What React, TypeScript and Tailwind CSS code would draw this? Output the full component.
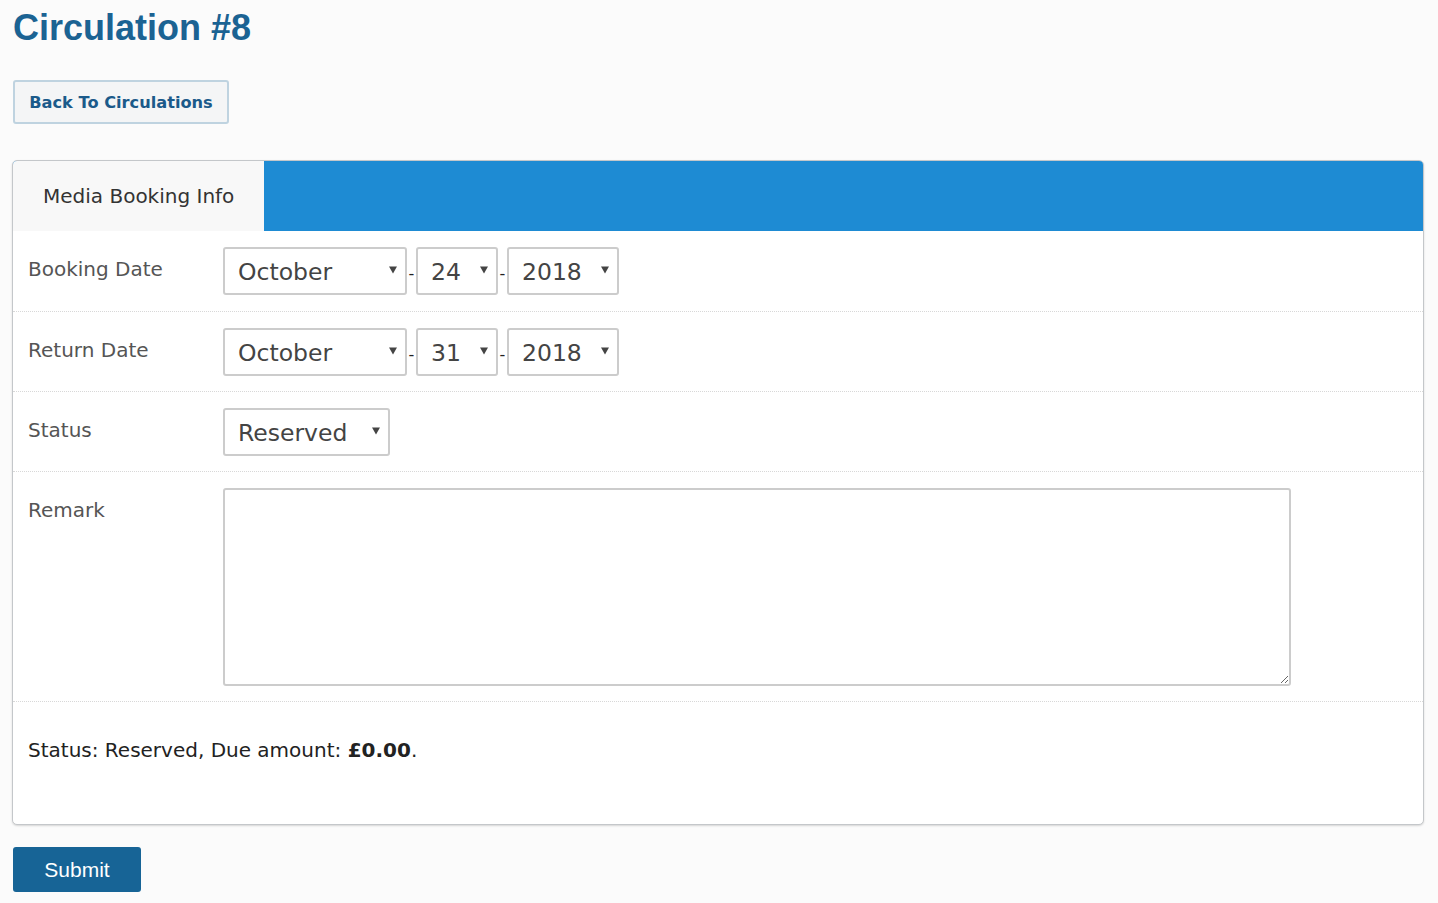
import React from "react";

const verdana = { fontFamily: '"DejaVu Sans", Verdana, sans-serif' };
const arial = { fontFamily: '"Liberation Sans", Arial, sans-serif' };

function Arrow() {
  return (
    <svg width="8" height="8" viewBox="0 0 8 8" className="pointer-events-none absolute right-[10px] top-[19px]">
      <path d="M0 0.5 L8 0.5 L4 7.5 Z" fill="#444" />
    </svg>
  );
}

function Select({ value, width }: { value: string; width: string }) {
  return (
    <div className={`relative h-[48px] ${width}`}>
      <div className="flex h-[48px] items-center rounded-[3px] border-2 border-[#cccccc] bg-white pl-[13px] pt-[3px] text-[23.5px] text-[#444]">
        {value}
      </div>
      <Arrow />
    </div>
  );
}

function Dash() {
  return <span className="mt-[6px] w-[9px] text-center text-[16px] text-[#222]">-</span>;
}

function Row({ label, children, first = false }: { label: string; children: React.ReactNode; first?: boolean }) {
  return (
    <div className={`flex border-b border-dotted border-[#d8d8d8] pt-[16px] ${first ? "pb-[16px]" : "pb-[15px]"}`}>
      <div className="w-[210px] shrink-0 pl-[15px] pt-[7px] text-[20px] text-[#555]">{label}</div>
      <div className="flex flex-1 items-center">{children}</div>
    </div>
  );
}

export default function App() {
  return (
    <div className="min-h-[903px] bg-[#fbfbfb] px-[12px] pt-[6px]" style={verdana}>
      <h1 className="pl-[1px] text-[36px] font-bold leading-[44px] text-[#1b6393]" style={arial}>
        Circulation #8
      </h1>

      <div className="mt-[30px] pl-[1px]">
        <button className="h-[44px] w-[216px] rounded-[3px] border-2 border-[#bfd3e0] bg-[#f4f5f6] pt-[2px] text-[16.2px] font-bold text-[#1b5a8a]">
          Back To Circulations
        </button>
      </div>

      <div className="mt-[36px] w-[1412px] overflow-hidden rounded-[5px] border border-[#c4c7ca] bg-white shadow-[0_1px_2px_rgba(0,0,0,0.15)]">
        <div className="flex h-[70px] bg-[#1e8bd3]">
          <div className="flex w-[251px] items-center bg-[#f8f8f8] pl-[30px] text-[20px] text-[#333]">
            Media Booking Info
          </div>
        </div>

        <Row label="Booking Date" first>
          <Select value="October" width="w-[184px]" />
          <Dash />
          <Select value="24" width="w-[82px]" />
          <Dash />
          <Select value="2018" width="w-[112px]" />
        </Row>
        <Row label="Return Date">
          <Select value="October" width="w-[184px]" />
          <Dash />
          <Select value="31" width="w-[82px]" />
          <Dash />
          <Select value="2018" width="w-[112px]" />
        </Row>
        <Row label="Status">
          <Select value="Reserved" width="w-[167px]" />
        </Row>
        <Row label="Remark">
          <textarea className="h-[198px] w-[1068px] rounded-[3px] border-2 border-[#cccccc] bg-white" />
        </Row>

        <div className="h-[122px] pl-[15px] pt-[33px] text-[20px] text-[#222]">
          Status: Reserved, Due amount: <b>£0.00</b>.
        </div>
      </div>

      <button
        className="mt-[22px] ml-[1px] h-[45px] w-[128px] rounded-[3px] bg-[#176496] text-[21px] text-white"
        style={arial}
      >
        Submit
      </button>
    </div>
  );
}
